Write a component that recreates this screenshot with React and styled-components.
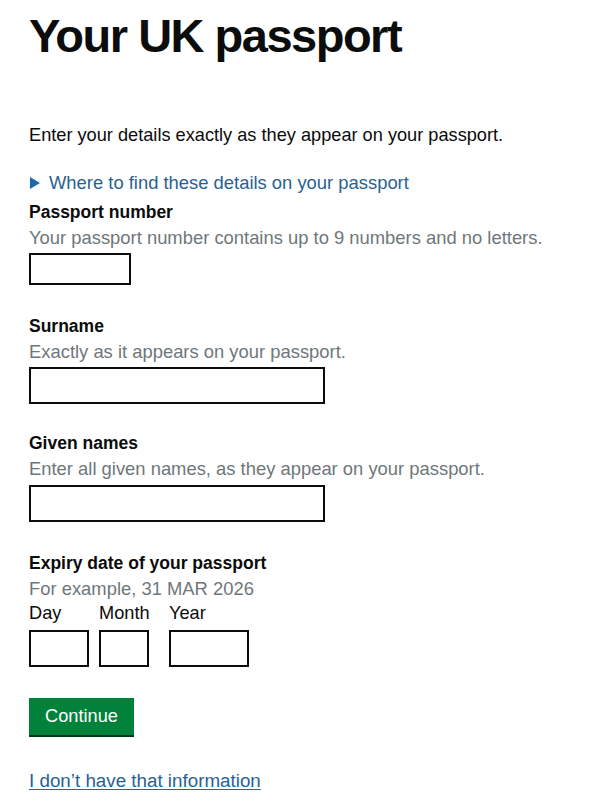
import React from 'react'
import styled, { createGlobalStyle } from 'styled-components'

const GlobalStyle = createGlobalStyle`
  body {
    margin: 0;
    background: #ffffff;
    font-family: "Liberation Sans", Arial, sans-serif;
    color: #0b0c0c;
  }
`

const Page = styled.main`
  padding: 11px 29px 20px;
  display: flex;
  flex-direction: column;
`

const Title = styled.h1`
  margin: 0;
  font-size: 47px;
  line-height: 50px;
  font-weight: 700;
  letter-spacing: -1.5px;
`

const Lead = styled.p`
  margin: 62px 0 0;
  font-size: 18.2px;
  line-height: 25px;
`

const Details = styled.div`
  margin-top: 22px;
  display: flex;
  align-items: center;
  gap: 9px;
  color: #2a6291;
  font-size: 18.4px;
  line-height: 25px;
`

const Arrow = styled.span`
  width: 0;
  height: 0;
  margin-left: 1px;
  border-top: 6px solid transparent;
  border-bottom: 6px solid transparent;
  border-left: 10px solid #1d68a6;
`

const Field = styled.div`
  display: flex;
  flex-direction: column;
  margin-top: ${p => p.$gap}px;
`

const Label = styled.label`
  font-size: 17.5px;
  line-height: 25px;
  font-weight: 700;
`

const Hint = styled.span`
  font-size: 18.4px;
  line-height: 25px;
  color: #6f777b;
`

const Input = styled.div`
  margin-top: ${p => p.$top || 3}px;
  width: ${p => p.$w}px;
  height: ${p => p.$h}px;
  box-sizing: border-box;
  border: 2px solid #0b0c0c;
  background: #fff;
`

const DateRow = styled.div`
  display: flex;
  gap: 10px;
`

const DatePart = styled.div`
  display: flex;
  flex-direction: column;
  width: ${p => p.$w}px;
  margin-right: ${p => p.$after || 0}px;
`

const DateLabel = styled.span`
  font-size: 18.2px;
  line-height: 25px;
  white-space: nowrap;
`

const Button = styled.button`
  align-self: flex-start;
  margin-top: 31px;
  width: 105px;
  height: 37px;
  padding: 0;
  border: none;
  background: #00823b;
  box-shadow: 0 2px 0 #003618;
  color: #fff;
  font-family: inherit;
  font-size: 18.2px;
  line-height: 37px;
`

const Link = styled.a`
  align-self: flex-start;
  margin-top: 33px;
  color: #2a6291;
  font-size: 18.8px;
  line-height: 25px;
  text-decoration: underline;
  text-underline-offset: 2px;
`

const dateParts = [
  { label: 'Day', w: 60 },
  { label: 'Month', w: 50, after: 10 },
  { label: 'Year', w: 80 },
]

export default function App() {
  return (
    <>
      <GlobalStyle />
      <Page>
        <Title>Your UK passport</Title>
        <Lead>Enter your details exactly as they appear on your passport.</Lead>
        <Details>
          <Arrow />
          <span>Where to find these details on your passport</span>
        </Details>

        <Field $gap={5}>
          <Label>Passport number</Label>
          <Hint>Your passport number contains up to 9 numbers and no letters.</Hint>
          <Input $w={102} $h={32} />
        </Field>

        <Field $gap={29}>
          <Label>Surname</Label>
          <Hint>Exactly as it appears on your passport.</Hint>
          <Input $w={296} $h={37} />
        </Field>

        <Field $gap={27}>
          <Label>Given names</Label>
          <Hint>Enter all given names, as they appear on your passport.</Hint>
          <Input $w={296} $h={37} $top={4} />
        </Field>

        <Field $gap={29}>
          <Label>Expiry date of your passport</Label>
          <Hint>For example, 31 MAR 2026</Hint>
          <DateRow>
            {dateParts.map(part => (
              <DatePart key={part.label} $w={part.w} $after={part.after}>
                <DateLabel>{part.label}</DateLabel>
                <Input $w={part.w} $h={37} $top={4} />
              </DatePart>
            ))}
          </DateRow>
        </Field>

        <Button>Continue</Button>
        <Link href="#">I don’t have that information</Link>
      </Page>
    </>
  )
}
